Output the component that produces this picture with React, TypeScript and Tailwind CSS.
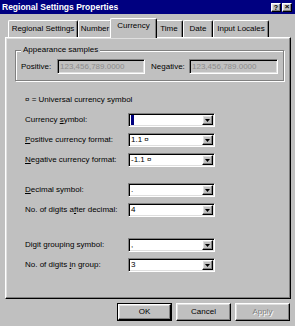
import React from "react";

const raised =
  "border border-t-white border-l-white border-r-black border-b-black shadow-[inset_-1px_-1px_0_#808080,inset_1px_1px_0_#dfdfdf]";
const sunken =
  "border border-t-[#808080] border-l-[#808080] border-b-white border-r-white shadow-[inset_1px_1px_0_#000,inset_-1px_-1px_0_#dfdfdf]";

function Tab({ label, w, selected }: { label: string; w: number; selected?: boolean }) {
  if (selected) {
    return (
      <div
        className="relative z-10 -mx-[2px] mb-[-1px] h-[20px] bg-[#c0c0c0] border-t border-l border-t-white border-l-white border-r border-r-black rounded-t-[2px] shadow-[inset_-1px_0_0_#808080] flex items-start justify-center pt-[3px]"
        style={{ width: w }}
      >
        {label}
      </div>
    );
  }
  return (
    <div
      className="h-[17px] border-t border-l border-t-white border-l-white border-r border-r-black rounded-t-[2px] shadow-[inset_-1px_0_0_#808080] flex items-center justify-center"
      style={{ width: w }}
    >
      {label}
    </div>
  );
}

function Combo({ children }: { children?: React.ReactNode }) {
  return (
    <div className={`w-[87px] h-[14px] bg-white flex items-center ${sunken}`}>
      <div className="flex-1 pl-[2px] flex items-center leading-none overflow-hidden">{children}</div>
      <div className={`w-[11px] h-[10px] mr-[1px] bg-[#c0c0c0] flex items-center justify-center ${raised}`}>
        <svg width="5" height="3" viewBox="0 0 5 3">
          <path d="M0 0H5L2.5 3Z" fill="#000" />
        </svg>
      </div>
    </div>
  );
}

function Row({ label, children, className = "" }: { label: React.ReactNode; children?: React.ReactNode; className?: string }) {
  return (
    <div className={`flex items-center h-[14px] ${className}`}>
      <div className="w-[103px]">{label}</div>
      <Combo>{children}</Combo>
    </div>
  );
}

function Btn({ children, def, disabled }: { children: React.ReactNode; def?: boolean; disabled?: boolean }) {
  return (
    <div className={`w-[55px] h-[18px] ${def ? "border border-black" : ""}`}>
      <div
        className={`w-full h-full flex items-center justify-center ${raised} ${
          disabled ? "text-[#808080] [text-shadow:1px_1px_0_#fff]" : ""
        }`}
      >
        {children}
      </div>
    </div>
  );
}

export default function App() {
  return (
    <div
      className="w-[295px] h-[326px] bg-[#c0c0c0] overflow-hidden text-[8px] text-black leading-none"
      style={{ fontFamily: '"Liberation Sans", Arial, sans-serif' }}
    >
      {/* Title bar */}
      <div className="h-[14px] bg-[#000080] flex items-center pl-[2px] pr-[3px]">
        <span className="text-white font-bold text-[8.5px]">Regional Settings Properties</span>
        <div className="ml-auto flex gap-[1px]">
          <div className={`w-[10px] h-[9px] bg-[#c0c0c0] flex items-center justify-center font-bold text-[7px] ${raised}`}>?</div>
          <div className={`w-[10px] h-[9px] bg-[#c0c0c0] flex items-center justify-center font-bold text-[8px] ${raised}`}>×</div>
        </div>
      </div>

      {/* Tabs */}
      <div className="mt-[4px] h-[19px] pl-[8px] flex items-end">
        <Tab label="Regional Settings" w={70} />
        <Tab label="Number" w={34} />
        <Tab label="Currency" w={47} selected />
        <Tab label="Time" w={28} />
        <Tab label="Date" w={30} />
        <Tab label="Input Locales" w={56} />
      </div>

      {/* Panel */}
      <div className="ml-[5px] w-[286px] h-[262px] border border-t-white border-l-white border-r-black border-b-black shadow-[inset_-1px_-1px_0_#808080,inset_1px_1px_0_#dfdfdf]">
        <div className="pl-[9px] pt-[12px]">
          {/* Group box */}
          <div className="relative w-[269px] h-[31px] border border-[#808080] shadow-[1px_1px_0_#fff,inset_1px_1px_0_#fff] flex items-center pl-[5px]">
            <span className="absolute -top-[5px] left-[5px] px-[2px] bg-[#c0c0c0]">Appearance samples</span>
            <span className="w-[36px] mt-[2px]">Positive:</span>
            <div className={`w-[88px] h-[15px] mt-[2px] flex items-center pl-[2px] text-[#8c8c8c] ${sunken}`}>123,456,789.0000</div>
            <span className="ml-[6px] w-[38px] mt-[2px]">Negative:</span>
            <div className={`w-[89px] h-[15px] mt-[2px] flex items-center pl-[2px] text-[#8c8c8c] ${sunken}`}>123,456,789.0000</div>
          </div>

          <div className="pl-[10px]">
            <div className="mt-[14px] h-[10px] flex items-center">¤ = Universal currency symbol</div>

            <Row className="mt-[8px]" label={<>Currency <u>s</u>ymbol:</>}>
              <span className="w-[3px] h-[10px] bg-[#000080]" />
            </Row>
            <Row className="mt-[6px]" label={<><u>P</u>ositive currency format:</>}>1.1 ¤</Row>
            <Row className="mt-[6px]" label={<><u>N</u>egative currency format:</>}>-1.1 ¤</Row>

            <Row className="mt-[16px]" label={<><u>D</u>ecimal symbol:</>}>.</Row>
            <Row className="mt-[6px]" label={<>No. of digits a<u>f</u>ter decimal:</>}>4</Row>

            <Row className="mt-[21px]" label={<>Digit grouping symbol:</>}>,</Row>
            <Row className="mt-[6px]" label={<>No. of digits <u>i</u>n group:</>}>3</Row>
          </div>
        </div>
      </div>

      {/* Buttons */}
      <div className="mt-[4px] flex justify-end gap-[4px] pr-[5px]">
        <Btn def>OK</Btn>
        <Btn>Cancel</Btn>
        <Btn disabled>Apply</Btn>
      </div>
    </div>
  );
}
